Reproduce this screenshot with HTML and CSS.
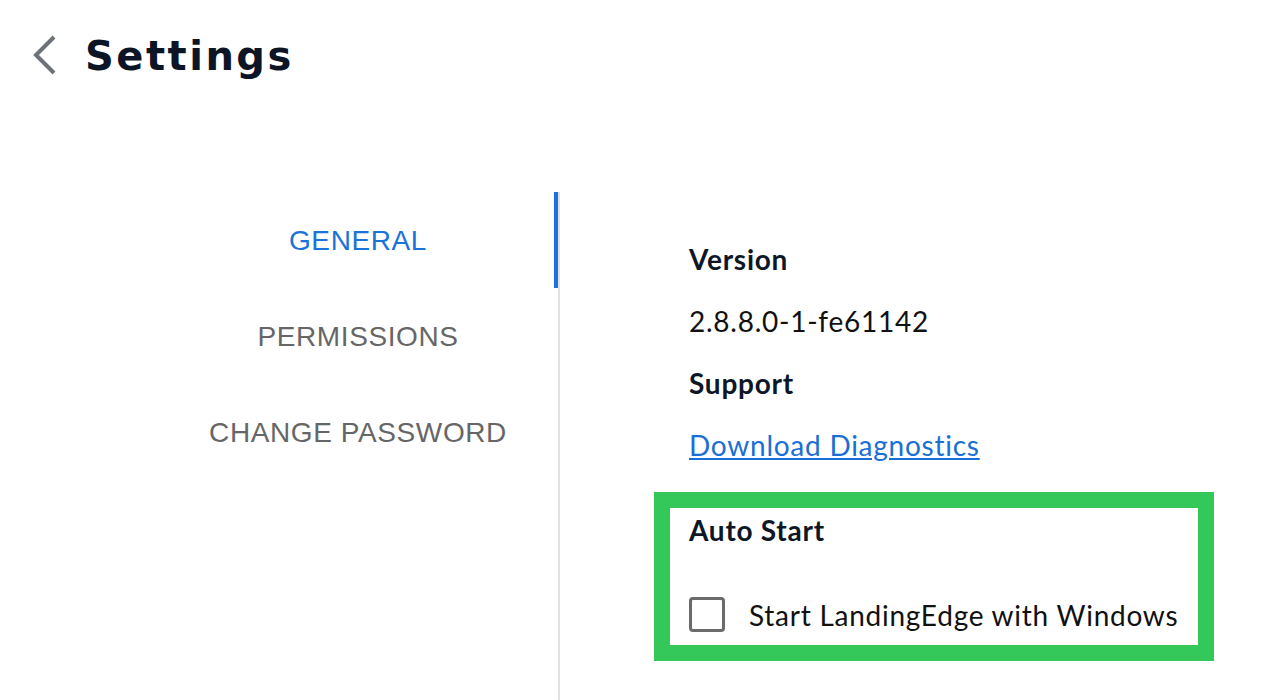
FILE: index.html
```html
<!DOCTYPE html>
<html lang="en">
<head>
    <meta charset="UTF-8">
    <meta name="viewport" content="width=device-width, initial-scale=1.0">
    <title>Settings</title>
    <link rel="stylesheet" href="styles.css">
</head>
<body>
    <div class="header">
        <button class="back" aria-label="Back">
            <svg width="30" height="44" viewBox="0 0 30 44">
                <polyline points="23,3 5,21 23,39" fill="none" stroke="#6c7278" stroke-width="4"/>
            </svg>
        </button>
        <h1>Settings</h1>
    </div>

    <div class="main">
        <div class="nav">
            <div class="nav-item active">GENERAL</div>
            <div class="nav-item">PERMISSIONS</div>
            <div class="nav-item">CHANGE PASSWORD</div>
        </div>

        <div class="content">
            <div class="label">Version</div>
            <div class="value">2.8.8.0-1-fe61142</div>
            <div class="label">Support</div>
            <div class="value"><a href="#">Download Diagnostics</a></div>

            <div class="auto-start">
                <div class="label">Auto Start</div>
                <label class="check-row">
                    <span class="checkbox"></span>
                    <span>Start LandingEdge with Windows</span>
                </label>
                <div class="highlight"></div>
            </div>
        </div>
    </div>
</body>
</html>
```

FILE: styles.css
```css
body {
    margin: 0;
    background-color: white;
    font-family: Lato, "Noto Sans", sans-serif;
    color: #0d1726;
    overflow: hidden;
}
.header {
    display: flex;
    align-items: center;
    height: 112px;
    padding-left: 31px;
}
.back {
    background: none;
    border: none;
    padding: 0;
    margin-right: 24px;
    height: 44px;
    cursor: pointer;
}
.header h1 {
    margin: 0;
    font-family: "DejaVu Sans", sans-serif;
    font-weight: 700;
    font-size: 40px;
    letter-spacing: 2.5px;
    color: #0b1526;
}
.main {
    display: flex;
    padding-top: 80px;
}
.nav {
    width: 400px;
    margin-left: 158px;
    border-right: 2px solid #e2e2e2;
    min-height: 520px;
}
.nav-item {
    height: 96px;
    line-height: 98px;
    text-align: center;
    font-family: "Liberation Sans", Arial, sans-serif;
    font-size: 28px;
    letter-spacing: 0.6px;
    color: #666;
    cursor: pointer;
}
.nav-item.active {
    color: #1a73d9;
    box-shadow: inset -4px 0 0 #1a73e0;
}
.content {
    padding-left: 129px;
    padding-top: 50px;
    letter-spacing: 0.75px;
}
.label {
    font-size: 28px;
    font-weight: 700;
    line-height: 34px;
    margin-bottom: 28px;
}
.value {
    font-size: 28px;
    line-height: 34px;
    margin-bottom: 28px;
    color: #111;
}
.value a {
    color: #1a6fd6;
}
.auto-start {
    position: relative;
    margin-top: 51px;
}
.auto-start .label {
    margin-bottom: 50px;
}
.check-row {
    display: flex;
    align-items: center;
    gap: 24px;
    font-size: 28px;
    color: #111;
}
.checkbox {
    width: 30px;
    height: 29px;
    border: 3px solid #6b6b6b;
    border-radius: 4px;
}
.highlight {
    position: absolute;
    top: -21px;
    left: -35px;
    width: 560px;
    height: 169px;
    box-sizing: border-box;
    border: 16px solid #34c759;
    pointer-events: none;
}
```
